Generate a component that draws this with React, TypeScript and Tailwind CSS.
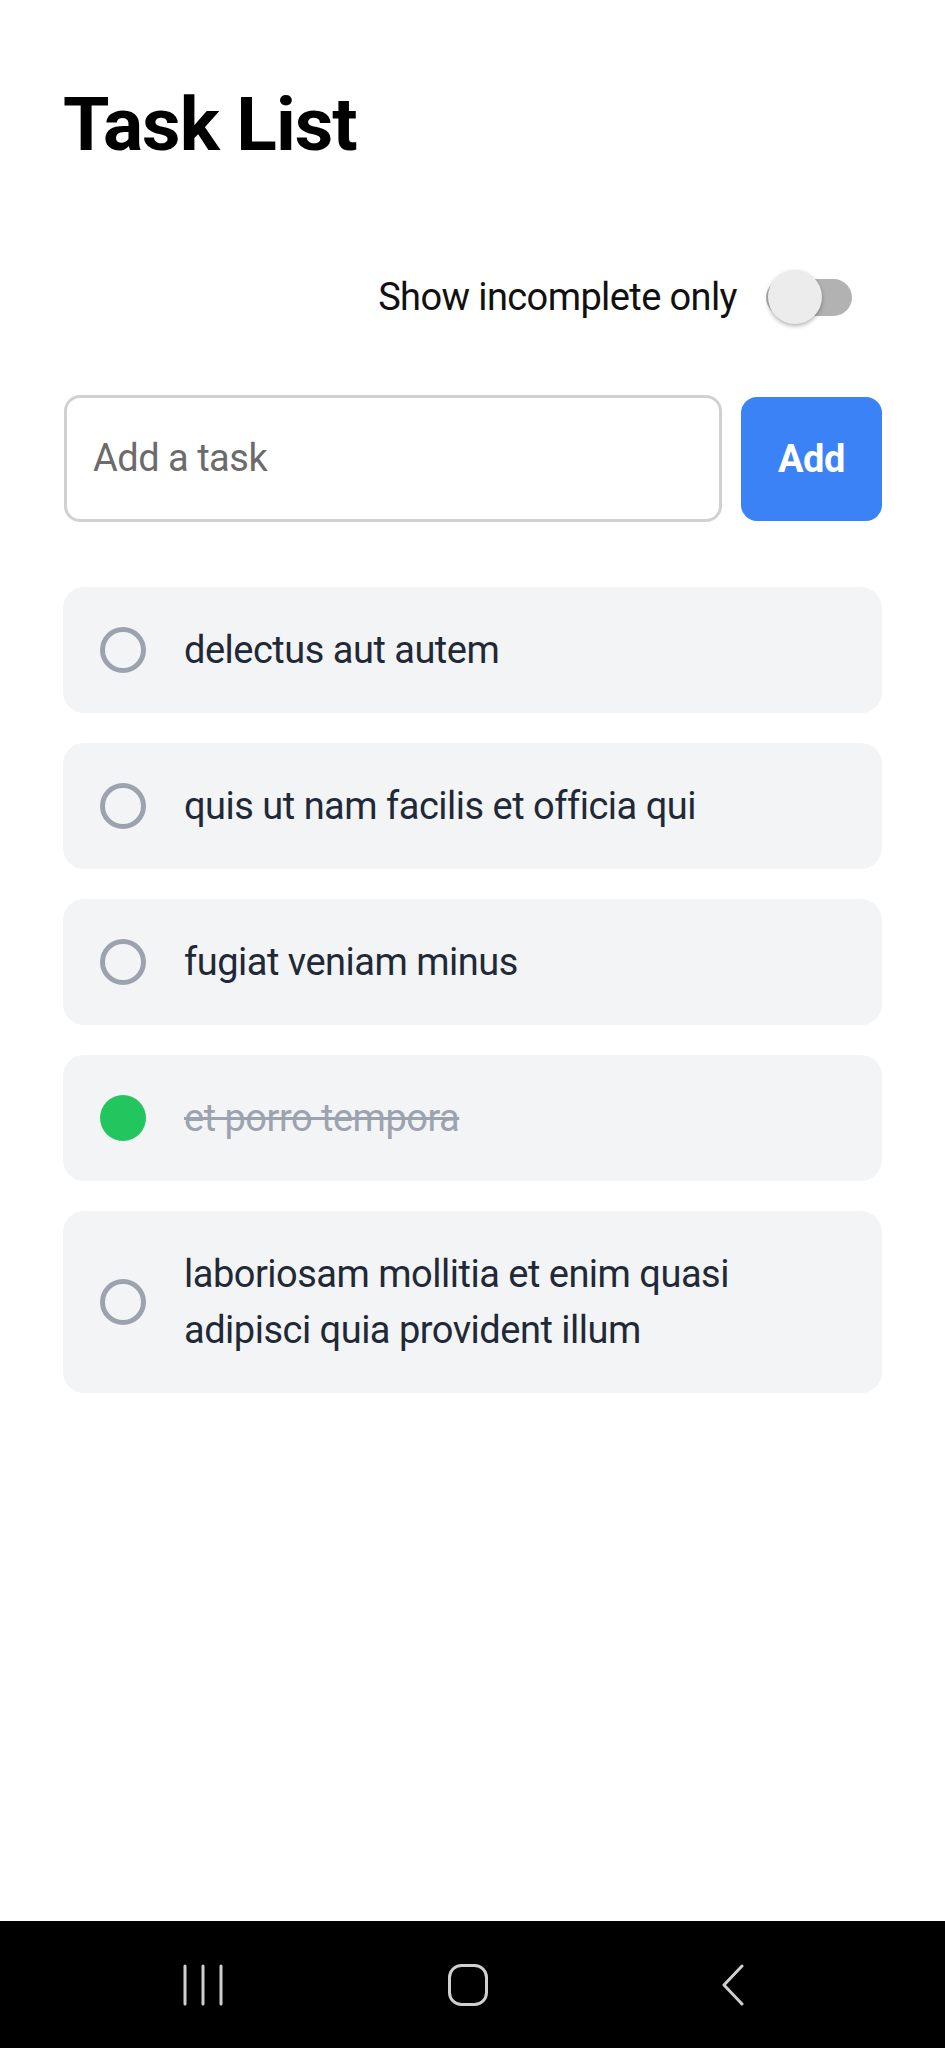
import React from "react";

type Task = { id: number; title: string; done: boolean };

const tasks: Task[] = [
  { id: 1, title: "delectus aut autem", done: false },
  { id: 2, title: "quis ut nam facilis et officia qui", done: false },
  { id: 3, title: "fugiat veniam minus", done: false },
  { id: 4, title: "et porro tempora", done: true },
  { id: 5, title: "laboriosam mollitia et enim quasi adipisci quia provident illum", done: false },
];

function TaskRow({ task }: { task: Task }) {
  return (
    <div className="flex items-center rounded-[21px] bg-[#f3f4f6] pl-[37px] pr-[36px] py-[35px]">
      {task.done ? (
        <div className="h-[46px] w-[46px] shrink-0 rounded-full bg-[#22c55e]" />
      ) : (
        <div className="h-[46px] w-[46px] shrink-0 rounded-full border-[5px] border-[#9ca3af]" />
      )}
      <div
        className={
          task.done
            ? "ml-[38px] text-[38px] leading-[56px] tracking-[-0.5px] text-[#9ca3af] line-through"
            : "ml-[38px] text-[38px] leading-[56px] tracking-[-0.5px] text-[#1f2937]"
        }
      >
        {task.title}
      </div>
    </div>
  );
}

export default function App() {
  return (
    <div
      className="flex h-[2048px] w-full flex-col bg-white"
      style={{ fontFamily: "Roboto, 'Noto Sans', sans-serif" }}
    >
      <div className="flex flex-1 flex-col px-[63px]">
        <h1 className="pt-[87px] text-[75px] font-bold leading-none tracking-[-1px] text-black">
          Task List
        </h1>

        <div className="mt-[107px] flex h-[56px] items-center justify-end">
          <span className="text-[38px] leading-[56px] tracking-[-0.6px] text-[#111111]">
            Show incomplete only
          </span>
          <div className="relative ml-[29px] mr-[30px] h-[37px] w-[86px] rounded-full bg-[#b2b2b2]">
            <div className="absolute left-[2px] top-[-9px] h-[54px] w-[54px] rounded-full bg-[#ececec] shadow-[0_2px_4px_rgba(0,0,0,0.3)]" />
          </div>
        </div>

        <div className="mt-[70px] flex items-center gap-[19px] pl-[1px]">
          <div className="flex h-[127px] flex-1 items-center rounded-[16px] border-[3px] border-[#d1d1d1] px-[26px]">
            <span className="text-[38px] tracking-[-0.5px] text-[#6b6b6b]">Add a task</span>
          </div>
          <button className="flex h-[124px] w-[141px] items-center justify-center rounded-[16px] bg-[#3b82f6] pt-[2px]">
            <span className="text-[38px] font-bold tracking-[-0.5px] text-white">Add</span>
          </button>
        </div>

        <div className="mt-[65px] flex flex-col gap-[30px]">
          {tasks.map((t) => (
            <TaskRow key={t.id} task={t} />
          ))}
        </div>
      </div>

      <div className="flex h-[127px] items-center justify-center gap-[225px] bg-black pr-[10px]">
        <svg width="40" height="42" viewBox="0 0 40 42" fill="none">
          <line x1="2" y1="2" x2="2" y2="40" stroke="#cfcfcf" strokeWidth="3" strokeLinecap="round" />
          <line x1="20" y1="2" x2="20" y2="40" stroke="#cfcfcf" strokeWidth="3" strokeLinecap="round" />
          <line x1="38" y1="2" x2="38" y2="40" stroke="#cfcfcf" strokeWidth="3" strokeLinecap="round" />
        </svg>
        <svg width="40" height="42" viewBox="0 0 40 42" fill="none">
          <rect x="1.5" y="1.5" width="37" height="39" rx="12" stroke="#cfcfcf" strokeWidth="3" />
        </svg>
        <svg width="40" height="42" viewBox="0 0 40 42" fill="none">
          <polyline points="29,2 11,21 29,40" stroke="#cfcfcf" strokeWidth="3" strokeLinecap="round" strokeLinejoin="round" />
        </svg>
      </div>
    </div>
  );
}
